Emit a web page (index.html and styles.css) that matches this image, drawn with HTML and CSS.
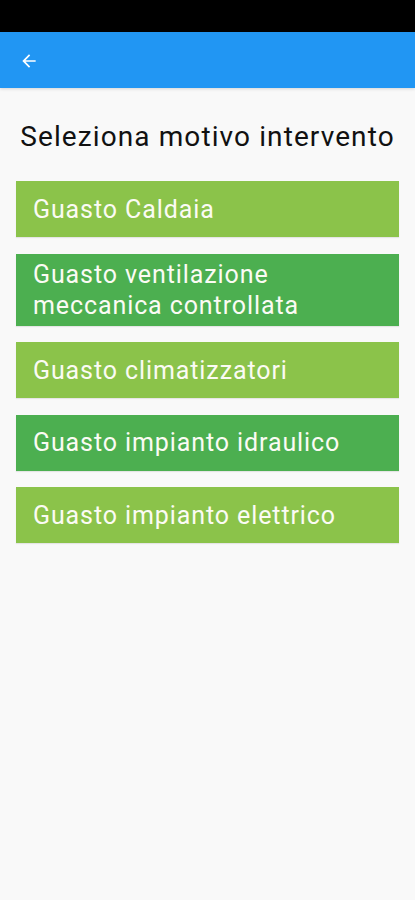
FILE: index.html
```html
<!DOCTYPE html>
<html lang="it">
<head>
<meta charset="utf-8">
<title>Seleziona motivo intervento</title>
<link rel="stylesheet" href="styles.css">
</head>
<body>
<div class="statusbar"></div>
<header class="appbar">
  <button class="back" aria-label="Indietro">
    <svg width="20" height="20" viewBox="0 0 24 24"><path d="M20 11H7.83l5.59-5.59L12 4l-8 8 8 8 1.41-1.41L7.83 13H20v-2z" fill="#fff"/></svg>
  </button>
</header>
<main class="content">
  <h1 class="title">Seleziona motivo intervento</h1>
  <ul class="list">
    <li class="item light">Guasto Caldaia</li>
    <li class="item dark">Guasto ventilazione meccanica controllata</li>
    <li class="item light">Guasto climatizzatori</li>
    <li class="item dark">Guasto impianto idraulico</li>
    <li class="item light">Guasto impianto elettrico</li>
  </ul>
</main>
</body>
</html>
```
FILE: styles.css
```css
* { box-sizing: border-box; }
html, body { margin: 0; padding: 0; }
body {
  background: #f9f9f9;
  font-family: Roboto, "Liberation Sans", sans-serif;
  height: 900px;
}
.statusbar { height: 32px; background: #000; }
.appbar {
  height: 56px;
  background: #2196f3;
  display: flex;
  align-items: center;
  padding-left: 19px;
  padding-top: 2px;
  box-shadow: 0 1px 3px rgba(0,0,0,0.15);
}
.back {
  border: 0;
  background: transparent;
  padding: 0;
  width: 20px;
  height: 20px;
  display: flex;
}
.content { padding: 0 16px; }
.title {
  margin: 32px 0 0;
  font-weight: 400;
  font-size: 28px;
  line-height: 34px;
  color: #111;
  text-align: center;
  letter-spacing: 1.1px;
  white-space: nowrap;
}
.list {
  list-style: none;
  margin: 27px 0 0;
  padding: 0;
  display: flex;
  flex-direction: column;
  gap: 16.5px;
}
.item {
  min-height: 56px;
  padding: 4px 17px;
  display: flex;
  align-items: center;
  color: #fbfbf4;
  font-size: 25px;
  line-height: 31px;
  letter-spacing: 0.9px;
  box-shadow: 0 1px 1px rgba(0,0,0,0.08);
}
.item.light { background: #8bc34a; }
.item.dark { background: #4caf50; padding: 5px 17px; }
```
